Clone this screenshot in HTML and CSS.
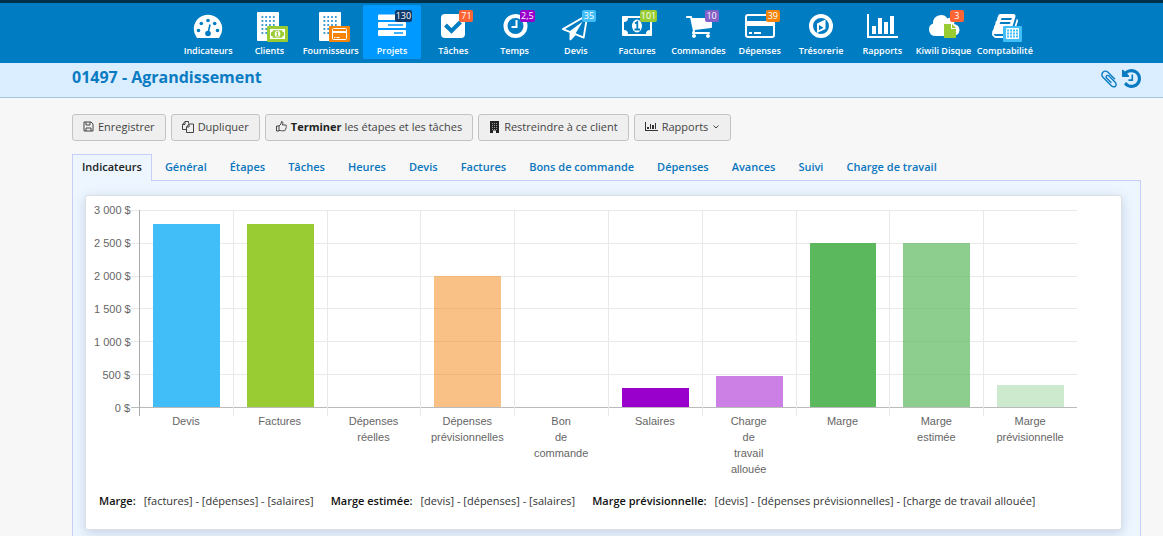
FILE: index.html
```html
<!DOCTYPE html>
<html lang="fr">
<head>
<meta charset="utf-8">
<meta name="viewport" content="width=device-width, initial-scale=1">
<title>01497 - Agrandissement</title>
<link rel="stylesheet" href="styles.css">
</head>
<body>
<header class="topbar">
  <nav class="nav">
    <a class="nav-item" href="#"><svg class="nav-icon" viewBox="0 0 44 32"><path class="w" d="M11.500 28h21a1.500 1.500 0 0 0 1-.8A14.200 14.200 0 1 0 10.500 27.200a1.500 1.500 0 0 0 1 .8z"/><g class="b"><circle cx="12.500" cy="20.500" r="1.800"/><circle cx="15.300" cy="13.500" r="1.800"/><circle cx="22" cy="10.500" r="1.800"/><circle cx="28.700" cy="13.500" r="1.800"/><circle cx="31.500" cy="20.500" r="1.800"/><circle cx="22" cy="23.500" r="2.800"/></g><path class="sb" stroke-width="1.600" d="M22 23.500L24 14.500"/></svg>Indicateurs</a>
    <a class="nav-item" href="#"><svg class="nav-icon" viewBox="0 0 44 32"><rect class="w" x="10" y="2" width="22" height="29" rx="1"/><path class="sb" stroke-width="1.600" stroke-dasharray="1.800 2" d="M14.500 7h14M14.500 11h14M14.500 15h14M14.500 19h14M14.500 23h14"/><rect x="20" y="16" width="21" height="16" rx="1" fill="#9c3"/><rect class="w" x="23" y="19" width="15" height="10"/><path fill="#9c3" d="M26 20.300h9a2 2 0 0 0 2 2v3.400a2 2 0 0 0-2 2h-9a2 2 0 0 0-2-2v-3.400a2 2 0 0 0 2-2z"/><ellipse class="w" cx="30.500" cy="24" rx="2.800" ry="3.300"/><path stroke="#9c3" stroke-width="1.200" fill="none" d="M29.500 23l1-.8v3.500M29.300 25.800h2.400"/></svg>Clients</a>
    <a class="nav-item" href="#"><svg class="nav-icon" viewBox="0 0 44 32"><rect class="w" x="10" y="2" width="22" height="29" rx="1"/><path class="sb" stroke-width="1.600" stroke-dasharray="1.800 2" d="M14.500 7h14M14.500 11h14M14.500 15h14M14.500 19h14M14.500 23h14"/><rect x="20" y="16" width="21" height="16" rx="1" fill="#f58409"/><rect class="sw" x="23.500" y="18.500" width="14" height="11" rx="1"/><path class="sw" stroke-width="2" d="M23 22h15"/><path class="sw" d="M25 27.500h1.500M27.500 27.500h3"/></svg>Fournisseurs</a>
    <a class="nav-item active" href="#"><svg class="nav-icon" viewBox="0 0 44 32"><g class="w"><rect x="8" y="4.500" width="28" height="5.500" rx="1"/><rect x="8" y="12" width="28" height="6" rx="1"/><rect x="8" y="20" width="28" height="6" rx="1"/></g><path stroke="#09f" stroke-width="1.500" d="M18 15h15M24 23h9"/></svg><span class="count navy">130</span>Projets</a>
    <a class="nav-item" href="#"><svg class="nav-icon" viewBox="0 0 44 32"><rect class="w" x="10" y="4" width="24" height="24" rx="4"/><path class="sb" stroke-width="4" d="M14.500 15l6 6 9-9"/></svg><span class="count red">71</span>Tâches</a>
    <a class="nav-item" href="#"><svg class="nav-icon" viewBox="0 0 44 32"><circle class="sw" cx="22.500" cy="16" r="10" stroke-width="4"/><path class="sw" stroke-width="2" d="M23.500 10v7h-5"/></svg><span class="count purple">2,5</span>Temps</a>
    <a class="nav-item" href="#"><svg class="nav-icon" viewBox="0 0 44 32"><path class="w" transform="translate(8 4) scale(.0147)" d="M1764 11q33 24 27 64l-256 1536q-5 29-32 45-14 8-31 8-11 0-24-5l-527-215-298 327q-18 21-47 21-14 0-23-4-19-7-30-23.500t-11-36.500v-452l-472-193q-37-14-40-55-3-39 32-59l1664-960q35-21 68 2zm-342 1499l221-1323-1434 827 336 137 863-639-478 797z"/></svg><span class="count sky">35</span>Devis</a>
    <a class="nav-item" href="#"><svg class="nav-icon" viewBox="0 0 44 32"><rect class="w" x="7" y="6" width="30" height="20" rx="1"/><path class="b" d="M13 8h18a4 4 0 0 0 4 4v8a4 4 0 0 0-4 4H13a4 4 0 0 0-4-4v-8a4 4 0 0 0 4-4z"/><ellipse class="w" cx="22" cy="16" rx="5" ry="6.500"/><path class="sb" stroke-width="1.800" d="M20 13.500l2.300-1.500v7.500M19.500 19.500h5.500"/></svg><span class="count green">101</span>Factures</a>
    <a class="nav-item" href="#"><svg class="nav-icon" viewBox="0 0 44 32"><path class="w" transform="translate(9 2) scale(.0156)" d="M704 1536q0 52-38 90t-90 38-90-38-38-90 38-90 90-38 90 38 38 90zm896 0q0 52-38 90t-90 38-90-38-38-90 38-90 90-38 90 38 38 90zm128-1088v512q0 24-16.500 42.500t-40.500 21.500l-1044 122q13 60 13 70 0 16-24 64h920q26 0 45 19t19 45-19 45-45 19h-1024q-26 0-45-19t-19-45q0-11 8-31.500t16-36 21.500-40 15.500-29.500l-177-823h-204q-26 0-45-19t-19-45 19-45 45-19h256q16 0 28.500 6.500t19.500 15.500 13 24.500 8 26 5.500 29.500 4.500 26h1201q26 0 45 19t19 45z"/></svg><span class="count violet">10</span>Commandes</a>
    <a class="nav-item" href="#"><svg class="nav-icon" viewBox="0 0 44 32"><rect class="sw" x="8" y="5" width="28" height="22" rx="2" stroke-width="2"/><path class="w" d="M8 11h28v5H8z"/><path class="sw" stroke-width="2" d="M11 23h3M16 23h7"/></svg><span class="count orange">39</span>Dépenses</a>
    <a class="nav-item" href="#"><svg class="nav-icon" viewBox="0 0 44 32"><circle class="sw" cx="22" cy="16" r="10" stroke-width="4"/><path class="w" fill-rule="evenodd" d="M26.500 9.500v9.500l-8.500 4v-9.500zM20 15v5l4.500-2.200z"/></svg>Trésorerie</a>
    <a class="nav-item" href="#"><svg class="nav-icon" viewBox="0 0 44 32"><path class="w" d="M7 4h2v22h29v2H7zM12 16h4v8h-4zM18 8h4v16h-4zM24 12h4v12h-4zM30 6h4v18h-4z"/></svg>Rapports</a>
    <a class="nav-item" href="#"><svg class="nav-icon" viewBox="0 0 44 32"><path class="w" d="M13.500 26A6.500 6.500 0 0 1 11 13.500 8 8 0 0 1 25.500 8.500a4.500 4.500 0 0 1 6.500 5.500A6 6 0 0 1 31 26z"/><path fill="#9c3" d="M22 14h7v5h5v9H22z"/><path fill="#9c3" d="M30 14l4 4h-4z"/></svg><span class="count red">3</span>Kiwili Disque</a>
    <a class="nav-item" href="#"><svg class="nav-icon" viewBox="0 0 44 32"><path class="w" transform="translate(8 2) scale(.0156)" d="M1703 478q40 57 18 129l-275 906q-19 64-76.500 107.500t-122.500 43.500h-923q-77 0-148.500-53.500t-99.500-131.500q-24-67-2-127 0-4 3-27t4-37q1-8-3-21.500t-3-19.500q2-11 8-21t16.500-23.500 16.500-23.500q23-38 45-91.500t30-91.500q3-10 .5-30t-.5-28q3-11 17-28t17-23q21-36 42-92t25-90q1-9-2.500-32t.5-28q4-13 22-30.500t22-22.500q19-26 42.500-84.500t27.500-96.500q1-8-3-25.500t-2-26.500q2-8 9-18t18-23 17-21q8-12 16.500-30.500t15-35 16-36 19.500-32 26.500-23.500 36-11.500 47.500 5.500l-1 3q38-9 51-9h761q74 0 114 56t18 130l-274 906q-36 119-71.500 153.500t-128.500 34.500h-869q-27 0-38 15-11 16-1 43 24 70 144 70h923q29 0 56-15.500t35-41.500l300-987q7-22 5-57 38 15 59 43zm-1064 2q-4 13 2 22.500t20 9.500h608q13 0 25.500-9.500t16.500-22.500l21-64q4-13-2-22.500t-20-9.500h-608q-13 0-25.500 9.500t-16.500 22.500zm-83 256q-4 13 2 22.500t20 9.500h608q13 0 25.500-9.500t16.500-22.500l21-64q4-13-2-22.500t-20-9.500h-608q-13 0-25.500 9.500t-16.500 22.500z"/><rect x="20" y="16" width="19" height="16" rx="1" fill="#41bdf8"/><rect class="w" x="23" y="18" width="13" height="11" rx="1"/><path stroke="#41bdf8" stroke-width="2" stroke-dasharray="2 1" fill="none" d="M24 20.500h11M24 23.500h11M24 26.500h11"/></svg>Comptabilité</a>
  </nav>
</header>

<div class="titlebar">
  <h1>01497 - Agrandissement</h1>
  <div class="title-actions">
    <a href="#" aria-label="Pièces jointes"><svg viewBox="0 0 1792 1792" width="20" height="20"><path d="M1596 1385q0 117-79 196t-196 79q-135 0-235-100l-777-776q-113-115-113-271 0-159 110-270t269-111q158 0 273 113l605 606q10 10 10 22 0 16-30.500 46.500t-46.500 30.500q-13 0-23-10l-606-607q-79-77-181-77-106 0-179 75t-73 181q0 105 76 181l776 777q63 63 145 63 64 0 106-42t42-106q0-82-63-145l-581-581q-26-24-60-24-29 0-48 19t-19 48q0 32 25 59l410 410q10 10 10 22 0 16-31 47t-47 31q-12 0-22-10l-410-410q-63-61-63-149 0-82 57-139t139-57q88 0 149 63l581 581q100 98 100 235z"/></svg></a>
    <a href="#" aria-label="Historique"><svg viewBox="128 128 1536 1536" width="19" height="19"><path d="M1664 896q0 156-61 298t-164 245-245 164-298 61q-172 0-327-72.500t-264-204.500q-7-10-6.500-22.500t8.500-20.500l137-138q10-9 25-9 16 2 23 12 73 95 179 147t225 52q104 0 198.500-40.500t163.500-109.500 109.500-163.500 40.500-198.500-40.500-198.500-109.500-163.500-163.500-109.500-198.500-40.500q-98 0-188 35.500t-160 101.500l137 138q31 30 14 69-17 40-59 40h-448q-26 0-45-19t-19-45v-448q0-42 40-59 39-17 69 14l130 129q107-101 244.500-156.500t284.500-55.500q156 0 298 61t245 164 164 245 61 298zm-640-288v448q0 14-9 23t-23 9h-320q-14 0-23-9t-9-23v-64q0-14 9-23t23-9h224v-352q0-14 9-23t23-9h64q14 0 23 9t9 23z"/></svg></a>
  </div>
</div>

<main class="content">
  <div class="toolbar">
    <button type="button" class="btn"><svg class="line" viewBox="0 0 11 11" width="11" height="11"><path d="M1 1h7l2 2v7H1zM3 1v3h4V1M3 10V7h5v3"/></svg>Enregistrer</button>
    <button type="button" class="btn"><svg class="line" viewBox="0 0 12 12" width="12" height="12"><path d="M4.500 8.500h-4v-5l2.500-3h3.500v2M.5 3.500H3v-3M4.500 6L7 3h4.500v8.500h-7zM4.500 6H7V3"/></svg>Dupliquer</button>
    <button type="button" class="btn"><svg class="line" viewBox="0 0 11 11" width="11" height="11"><path d="M.5 5h2.500v5H.5zM3 5l2-2 .5-2.500c1.500 0 1.500 1.500 1 3.500h3.200c1 0 1 1.300.3 1.500.5.500.3 1.300-.2 1.500.3.600 0 1.200-.4 1.300.2 1-.4 1.400-1.400 1.400C5.500 10 5 9.500 3 9.500"/></svg><span><b>Terminer</b> les étapes et les tâches</span></button>
    <button type="button" class="btn"><svg viewBox="0 0 11 12" width="11" height="12"><path fill="#222" d="M1 0h9v12H7V9.500H4V12H1z"/><path stroke="#999" stroke-dasharray="1 1" d="M3 2.500h5M3 4.500h5M3 6.500h5M3 8.500h5"/></svg>Restreindre à ce client</button>
    <button type="button" class="btn"><svg viewBox="0 0 13 11" width="13" height="11"><path fill="#333" d="M0 1h1v8h12v1H0zM2 6h2v2H2zM5 3h1v5H5zM7 4h2v4H7zM10 2h1v6h-1z"/></svg>Rapports<svg class="line" viewBox="0 0 8 6" width="8" height="6"><path d="M1.500 1.500L4 4l2.500-2.500"/></svg></button>
  </div>

  <nav class="tabs">
    <a class="tab current" href="#">Indicateurs</a>
    <a class="tab" href="#">Général</a>
    <a class="tab" href="#">Étapes</a>
    <a class="tab" href="#">Tâches</a>
    <a class="tab" href="#">Heures</a>
    <a class="tab" href="#">Devis</a>
    <a class="tab" href="#">Factures</a>
    <a class="tab" href="#">Bons de commande</a>
    <a class="tab" href="#">Dépenses</a>
    <a class="tab" href="#">Avances</a>
    <a class="tab" href="#">Suivi</a>
    <a class="tab" href="#">Charge de travail</a>
  </nav>

  <section class="panel">
    <div class="card">
      <div class="chart">
        <div class="y-axis"><span>3 000 $</span><span>2 500 $</span><span>2 000 $</span><span>1 500 $</span><span>1 000 $</span><span>500 $</span><span>0 $</span></div>
        <div class="lines"><i></i><i></i><i></i><i></i><i></i><i></i></div>
        <div class="columns">
          <div class="column"><div class="bar c-devis" style="height:93%"></div></div>
          <div class="column"><div class="bar c-factures" style="height:93%"></div></div>
          <div class="column"></div>
          <div class="column"><div class="bar c-prev" style="height:66.700%"></div></div>
          <div class="column"></div>
          <div class="column"><div class="bar c-salaires" style="height:9.600%"></div></div>
          <div class="column"><div class="bar c-charge" style="height:15.600%"></div></div>
          <div class="column"><div class="bar c-marge" style="height:83.400%"></div></div>
          <div class="column"><div class="bar c-estimee" style="height:83.400%"></div></div>
          <div class="column"><div class="bar c-marge-prev" style="height:11.400%"></div></div>
        </div>
        <div class="x-axis">
          <span>Devis</span>
          <span>Factures</span>
          <span>Dépenses<br>réelles</span>
          <span>Dépenses<br>prévisionnelles</span>
          <span>Bon<br>de<br>commande</span>
          <span>Salaires</span>
          <span>Charge<br>de<br>travail<br>allouée</span>
          <span>Marge</span>
          <span>Marge<br>estimée</span>
          <span>Marge<br>prévisionnelle</span>
        </div>
      </div>
      <dl class="formulas">
        <div><dt>Marge:</dt><dd>[factures] - [dépenses] - [salaires]</dd></div>
        <div><dt>Marge estimée:</dt><dd>[devis] - [dépenses] - [salaires]</dd></div>
        <div><dt>Marge prévisionnelle:</dt><dd>[devis] - [dépenses prévisionnelles] - [charge de travail allouée]</dd></div>
      </dl>
    </div>
  </section>
</main>
</body>
</html>
```
FILE: styles.css
```css
* { box-sizing: border-box; }

body {
  margin: 0;
  min-height: 100vh;
  display: flex;
  flex-direction: column;
  background: #f7f7f7;
  color: #333;
  font: 11px/16px "Open Sans", "Noto Sans", sans-serif;
}

a { text-decoration: none; }
svg { flex: none; }

.topbar {
  background: #007cc3;
  border-top: 3px solid #00304a;
  padding: 2px 20px 4px 179px;
}

.nav {
  display: grid;
  grid-template-columns: repeat(14, 1fr);
  column-gap: 3px;
  max-width: 855px;
}

.nav-item {
  position: relative;
  display: flex;
  flex-direction: column;
  align-items: center;
  gap: 1px;
  padding-top: 5px;
  border-radius: 2px;
  color: #fff;
  font-size: 9px;
  font-weight: 600;
  line-height: 16px;
  white-space: nowrap;
}
.nav-item.active { background: #09f; }
.nav-icon { width: 44px; height: 32px; }

.w { fill: #fff; }
.b { fill: #007cc3; }
.sw { fill: none; stroke: #fff; }
.sb { fill: none; stroke: #007cc3; }

.count {
  position: absolute;
  top: 5px;
  right: 9px;
  min-width: 14px;
  padding: 0 1px;
  border-radius: 2px;
  font-size: 9px;
  font-weight: 400;
  line-height: 12px;
  text-align: center;
}
.navy { background: #123a6b; }
.red { background: #ff6435; }
.purple { background: #90c; }
.sky { background: #41bdf8; }
.green { background: #9c3; }
.violet { background: #8560c8; }
.orange { background: #f58409; }

.titlebar {
  display: flex;
  justify-content: space-between;
  padding: 4px 22px 6px 72px;
  background: #dbeeff;
  border-bottom: 1px solid #a3c6de;
}
.titlebar h1 {
  margin: 0;
  color: #0a7bc2;
  font-size: 16px;
  line-height: 20px;
  font-weight: 700;
}
.title-actions { display: flex; gap: 3px; padding-top: 2px; height: 24px; }
.title-actions svg { display: block; fill: #0a7bc2; }

.content {
  flex: 1;
  display: flex;
  flex-direction: column;
  padding: 16px 22px 0 72px;
}

.toolbar { display: flex; flex-wrap: wrap; gap: 5px; }
.btn {
  display: flex;
  align-items: center;
  gap: 4px;
  height: 27px;
  padding: 0 10px 2px;
  border: 1px solid #c3c3c3;
  border-radius: 3px;
  background: #efefef;
  color: #444;
  font: inherit;
}
.btn b { color: #222; }
.line { fill: none; stroke: #444; }

.tabs { display: flex; gap: 3px; margin-top: 13px; }
.tab {
  padding: 4px 9px 5px;
  border: 1px solid transparent;
  border-bottom: 0;
  color: #0a76bd;
  font-weight: 600;
  white-space: nowrap;
}
.tab.current {
  position: relative;
  z-index: 1;
  margin-bottom: -1px;
  padding-bottom: 6px;
  background: #edf6ff;
  border-color: #c6cefa;
  color: #222;
}

.panel {
  flex: 1;
  padding: 14px 18px 7px 12px;
  background: #edf6ff;
  border: 1px solid #c6cefa;
  border-bottom: 0;
}

.card {
  padding: 14px 44px 20px 8px;
  border: 1px solid #dcdfe4;
  border-radius: 3px;
  background: #fff;
  box-shadow: 0 3px 12px rgba(60, 80, 140, .22);
}

.chart {
  display: grid;
  grid-template-columns: 37px 8px 1fr;
  grid-template-rows: 198px 8px auto;
  color: #666;
  font-family: "Liberation Sans", Arial, sans-serif;
}
.y-axis {
  display: flex;
  flex-direction: column;
  justify-content: space-between;
  margin: -6px 0;
  padding-right: 1px;
  line-height: 12px;
  text-align: right;
  white-space: nowrap;
}
.lines {
  grid-area: 1 / 2 / 2 / 4;
  display: grid;
  grid-template-rows: repeat(6, 1fr);
  border-bottom: 1px solid #bbb;
}
.lines i { border-top: 1px solid #e9e9e9; }
.columns, .x-axis {
  display: grid;
  grid-template-columns: repeat(10, 1fr);
}
.columns { grid-area: 1 / 3 / 3 / 4; }
.column {
  display: flex;
  align-items: flex-end;
  justify-content: center;
  padding-bottom: 9px;
  border-left: 1px solid #e9e9e9;
}
.column:first-child { border-left-color: #aaa; }
.bar { width: 72%; }

.c-devis { background: #41bdf8; }
.c-factures { background: #9c3; }
.c-prev { background: rgba(245, 132, 16, .5); }
.c-salaires { background: #90c; }
.c-charge { background: rgba(153, 0, 204, .5); }
.c-marge { background: #5cb85c; }
.c-estimee { background: rgba(92, 184, 92, .7); }
.c-marge-prev { background: rgba(92, 184, 92, .3); }

.x-axis {
  grid-area: 3 / 3 / 4 / 4;
  margin-top: -3px;
  line-height: 16px;
  text-align: center;
}

.formulas {
  display: flex;
  flex-wrap: wrap;
  gap: 0 17px;
  margin: 16px 0 0 5px;
}
.formulas div { display: flex; gap: 8px; }
.formulas dt { color: #111; font-weight: 600; }
.formulas dd { margin: 0; }
```
